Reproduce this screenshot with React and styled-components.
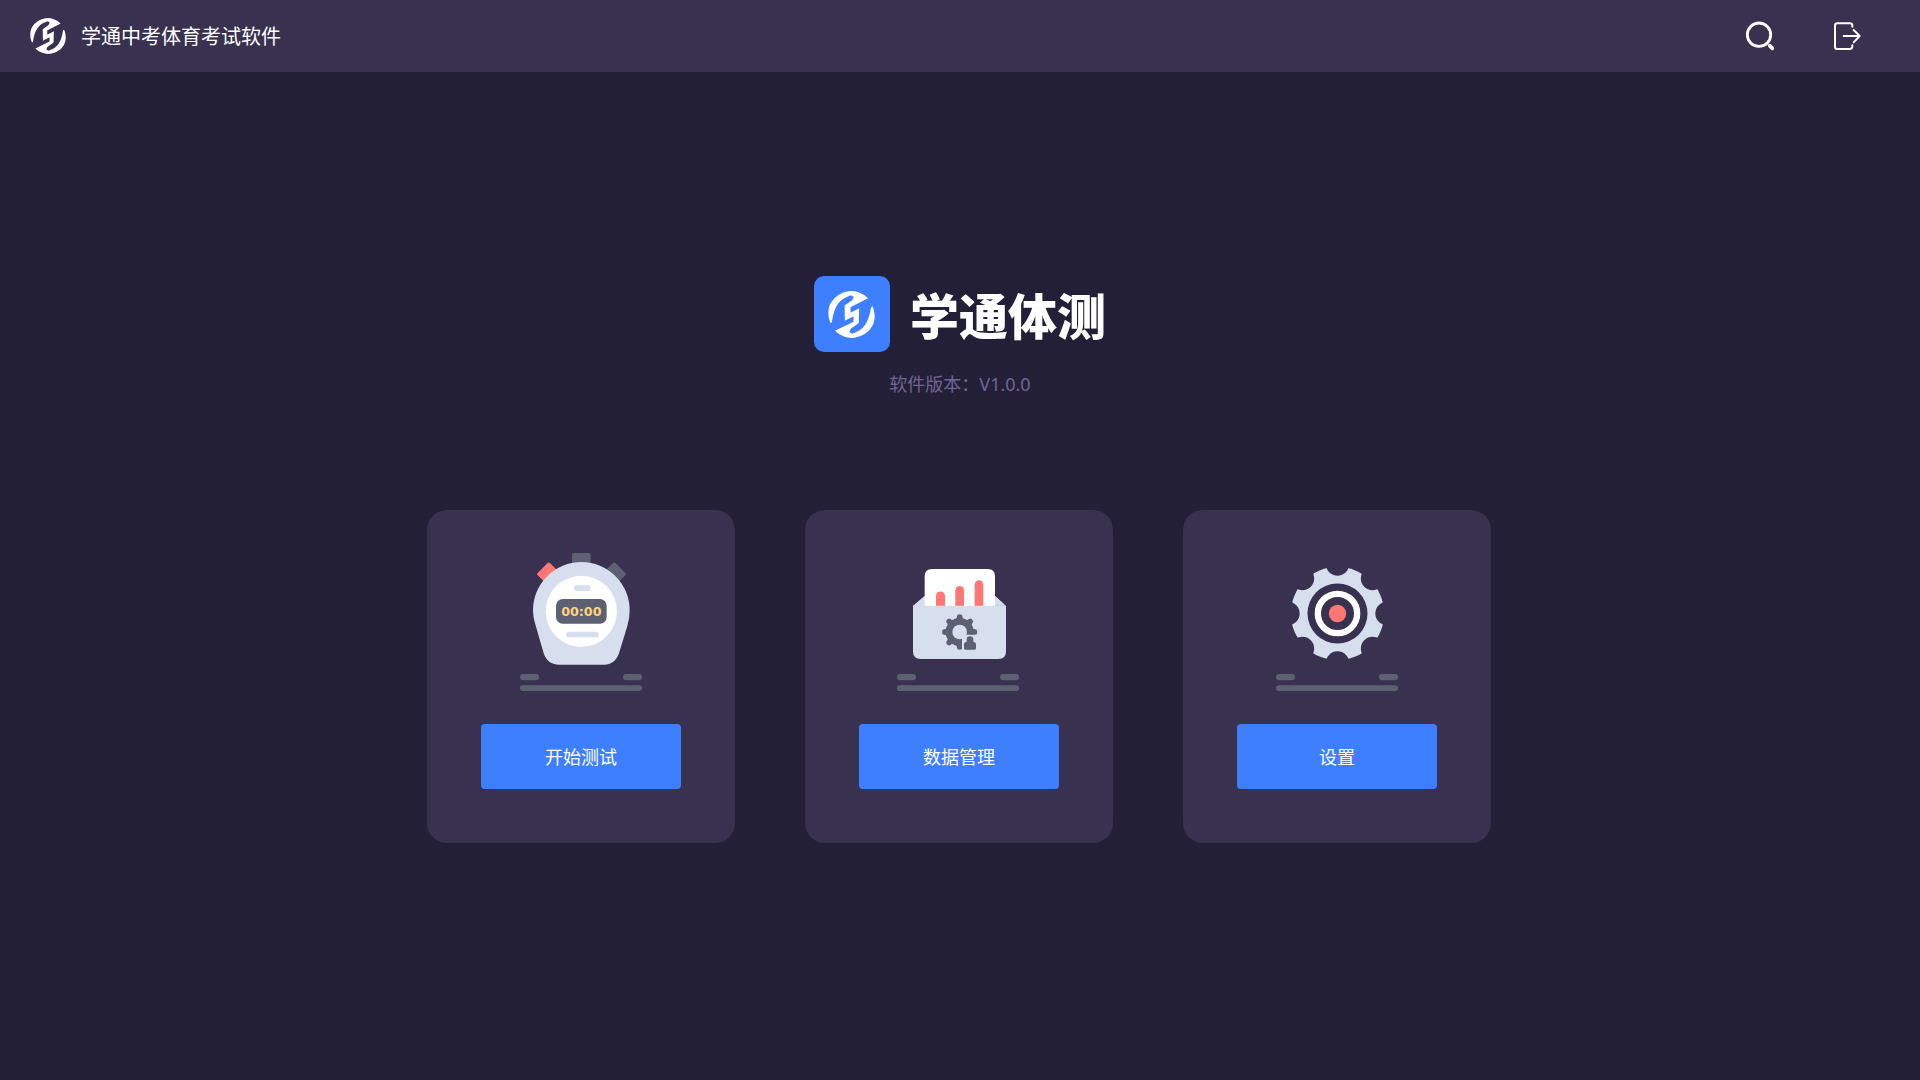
import React from 'react';
import styled, { createGlobalStyle } from 'styled-components';

const GlobalStyle = createGlobalStyle`
  *, *::before, *::after { box-sizing: border-box; }
  body {
    margin: 0;
    background: #231f36;
    color: #ffffff;
    font-family: "Noto Sans", "Noto Sans CJK SC", sans-serif;
  }
  button { font: inherit; color: inherit; border: 0; cursor: pointer; }
`;

const Page = styled.div`
  min-height: 100vh;
  display: flex;
  flex-direction: column;
`;

const Header = styled.header`
  display: flex;
  align-items: center;
  justify-content: space-between;
  height: 72px;
  padding: 0 53px 0 30px;
  background: #383250;
`;

const Brand = styled.div`
  display: flex;
  align-items: center;
  gap: 15px;
`;

const AppTitle = styled.h1`
  margin: 0;
  font-family: "Noto Sans CJK SC", sans-serif;
  font-size: 20px;
  line-height: 24px;
  font-weight: 400;
`;

const Tools = styled.nav`
  display: flex;
  gap: 47px;
`;

const IconButton = styled.button`
  display: flex;
  align-items: center;
  justify-content: center;
  width: 40px;
  height: 40px;
  padding: 0;
  background: transparent;
`;

const Main = styled.main`
  display: flex;
  flex-direction: column;
  align-items: center;
  padding: 204px 24px 48px;
`;

const Hero = styled.div`
  display: flex;
  align-items: center;
  gap: 20px;
`;

const LogoTile = styled.div`
  display: flex;
  align-items: center;
  justify-content: center;
  width: 76px;
  height: 76px;
  border-radius: 10px;
  background: #3e7fff;
`;

const ProductName = styled.h2`
  margin: 0;
  font-family: "Noto Sans CJK SC", sans-serif;
  font-size: 49px;
  line-height: 76px;
  font-weight: 900;
`;

const Version = styled.p`
  margin: 20px 0 114px;
  font-size: 18px;
  line-height: 24px;
  font-weight: 400;
  color: #6f6593;
`;

const Cards = styled.div`
  display: flex;
  flex-wrap: wrap;
  justify-content: center;
  gap: 70px;
  padding-right: 2px;
`;

const Card = styled.section`
  display: flex;
  flex-direction: column;
  align-items: center;
  gap: 32px;
  width: 308px;
  padding: 42px 54px 54px;
  border-radius: 20px;
  background: #383250;
`;

const CardButton = styled.button`
  width: 100%;
  height: 65px;
  padding: 0 0 2px;
  border-radius: 4px;
  background: #3e7fff;
  font-family: "Noto Sans CJK SC", sans-serif;
  font-size: 18px;
  line-height: 24px;
  font-weight: 400;
`;

const Logo = ({ size }) => (
  <svg width={size} height={size} viewBox="113 93 142 142" fill="#fff" aria-hidden="true">
    <path d="M121 190 C112 172 111 146 122 128 A71 71 0 0 1 234 115 L181 142 L181 159 L207 145 L206 190 L182 207 L177 217 L186 222 L200 216 C227 205 238 176 243 143 L247 138 C256 156 257 182 246 200 A71 71 0 0 1 134 213 L190 186 L190 169 L164 183 L163 137 L186 121 L191 111 L182 106 L168 112 C141 123 130 152 125 185 Q123 191 121 190 Z" />
  </svg>
);

const SearchIcon = () => (
  <svg width="30" height="30" viewBox="105 63 90 90" fill="none" stroke="#fff" strokeLinecap="round" aria-hidden="true">
    <circle cx="147" cy="104" r="35" strokeWidth="8.5" />
    <path d="M179 137 L187 145" strokeWidth="11" />
  </svg>
);

const ExitIcon = () => (
  <svg width="30" height="30" viewBox="366 63 90 90" fill="none" stroke="#fff" strokeWidth="6" strokeLinecap="round" strokeLinejoin="round" aria-hidden="true">
    <path d="M427 80 V77 Q427 70 419 70 H382 Q375 70 375 77 V140 Q375 147 382 147 H419 Q427 147 427 139 V136" />
    <path d="M401 108 H448 M431 90 L449 108 L431 127" />
  </svg>
);

const Ground = ({ x }) => (
  <g fill="#5c6072">
    <rect x={x} y="402" width="57" height="19" rx="9" />
    <rect x={x + 309} y="402" width="57" height="19" rx="9" />
    <rect x={x} y="436" width="366" height="17" rx="8" />
  </g>
);

const Stopwatch = () => (
  <svg width="130" height="140" viewBox="48 36 390 420" aria-hidden="true">
    <rect x="216" y="39" width="56" height="40" rx="6" fill="#5c6072" />
    <rect x="-20" y="-26" width="40" height="52" rx="5" fill="#ff7675" transform="translate(142 98) rotate(45)" />
    <rect x="-20" y="-26" width="40" height="52" rx="5" fill="#5c6072" transform="translate(347 98) rotate(-45)" />
    <path fill="#d7deed" d="M99 211 A145 145 0 0 1 389 211 Q389 236 382 258 L357 340 C349 363 334 374 312 374 H177 C154 374 138 362 131 340 L105 250 Q99 230 99 211 Z" />
    <circle cx="244" cy="214" r="107" fill="#fff" />
    <rect x="222" y="136" width="50" height="17" rx="8" fill="#d7deed" />
    <rect x="168" y="177" width="152" height="74" rx="20" fill="#5c6072" />
    <text x="244" y="228" textAnchor="middle" fontFamily="DejaVu Sans, sans-serif" fontWeight="700" fontSize="38" fill="#ffd47c">00:00</text>
    <rect x="198" y="275" width="98" height="17" rx="8" fill="#d7deed" />
    <Ground x={60} />
  </svg>
);

const Envelope = () => (
  <svg width="130" height="140" viewBox="42 36 390 420" aria-hidden="true">
    <path d="M99 198 L134 168 H345 L378 198 Z" fill="#c3cbe0" />
    <path d="M99 198 L134 168 V198 Z M345 168 L374 194 H345 Z" fill="#d7deed" />
    <path d="M134 198 V109 Q134 87 156 87 H323 Q345 87 345 109 V198 Z" fill="#fff" />
    <g fill="#ff7675">
      <path d="M168 198 V168 A13 13 0 0 1 195 168 V198 Z" />
      <path d="M226 198 V151 A13 13 0 0 1 252 151 V198 Z" />
      <path d="M284 198 V134 A13 13 0 0 1 310 134 V198 Z" />
    </g>
    <path d="M99 197 H378 V334 Q378 357 355 357 H122 Q99 357 99 334 Z" fill="#d7deed" />
    <g fill="#5c6072">
      <circle cx="239" cy="276" r="42" />
      {[0, 45, 90, 135, 180, 225, 270, 315].map((angle) => (
        <path key={angle} transform={`rotate(${angle} 239 276)`} d="M226 239 Q231 235 231 229 Q231 223 239 223 Q247 223 247 229 Q247 235 252 239 Z" />
      ))}
    </g>
    <circle cx="239" cy="276" r="22" fill="#d7deed" />
    <path d="M246 296 L256 284 H296 V334 H246 Z" fill="#d7deed" />
    <path d="M268 276 H291 V280 Q291 283 286 283 H270 Z" fill="#5c6072" />
    <path d="M252 313 Q252 306 260 305 V299 A10 10 0 0 1 280 299 V305 Q288 306 288 313 V325 Q288 329 284 329 H256 Q252 329 252 325 Z" fill="#5c6072" />
    <Ground x={51} />
  </svg>
);

const Gear = () => (
  <svg width="130" height="140" viewBox="36 36 390 420" aria-hidden="true">
    <mask id="gear-notches">
      <rect x="36" y="36" width="390" height="420" fill="#fff" />
      {[0, 45, 90, 135, 180, 225, 270, 315].map((angle) => (
        <circle key={angle} cx="232.5" cy="72" r="35" fill="#000" transform={`rotate(${angle} 232.5 220.5)`} />
      ))}
      <circle cx="232.5" cy="220.5" r="90" fill="#000" />
    </mask>
    <circle cx="232.5" cy="220.5" r="140" fill="#d7deed" mask="url(#gear-notches)" />
    <circle cx="232.5" cy="220.5" r="59" fill="none" stroke="#fff" strokeWidth="19" />
    <circle cx="232.5" cy="220.5" r="26" fill="#ff7675" />
    <Ground x={48} />
  </svg>
);

const entries = [
  { label: '开始测试', Picture: Stopwatch },
  { label: '数据管理', Picture: Envelope },
  { label: '设置', Picture: Gear },
];

export default function App() {
  return (
    <Page>
      <GlobalStyle />
      <Header>
        <Brand>
          <Logo size={36} />
          <AppTitle>学通中考体育考试软件</AppTitle>
        </Brand>
        <Tools>
          <IconButton type="button" aria-label="搜索"><SearchIcon /></IconButton>
          <IconButton type="button" aria-label="退出"><ExitIcon /></IconButton>
        </Tools>
      </Header>
      <Main>
        <Hero>
          <LogoTile><Logo size={47} /></LogoTile>
          <ProductName>学通体测</ProductName>
        </Hero>
        <Version>软件版本：V1.0.0</Version>
        <Cards>
          {entries.map(({ label, Picture }) => (
            <Card key={label}>
              <Picture />
              <CardButton type="button">{label}</CardButton>
            </Card>
          ))}
        </Cards>
      </Main>
    </Page>
  );
}
